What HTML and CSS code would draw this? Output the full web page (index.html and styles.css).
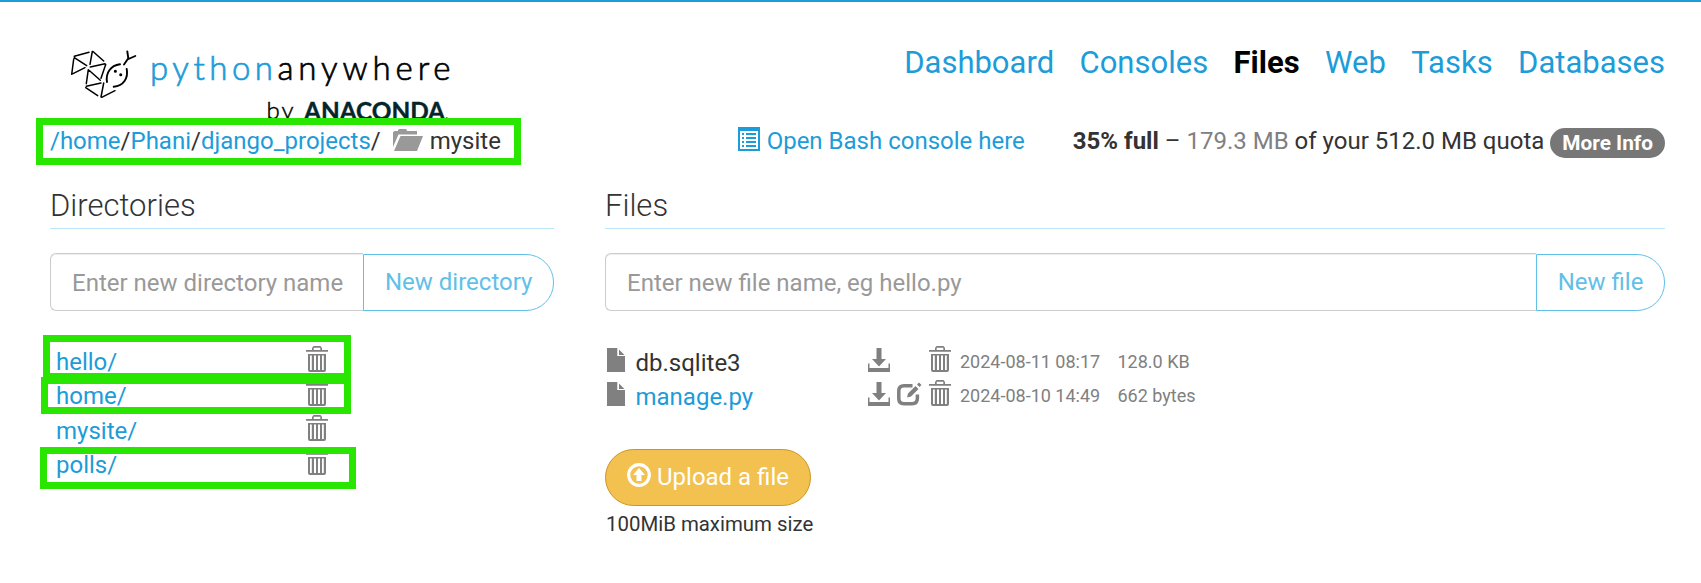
FILE: index.html
```html
<!DOCTYPE html>
<html lang="en">
<head>
<meta charset="utf-8">
<title>Files : PythonAnywhere</title>
<link rel="stylesheet" href="styles.css">
</head>
<body>
<svg class="defs" width="0" height="0">
  <symbol id="trash" viewBox="0 0 22 26">
    <path fill="currentColor" d="M0 4h6V2l1.500-2h7L16 2v2h6v1.700H0zM7.700 4h6.600V1.700H7.700zM2 8h18v16q0 2-2 2H4q-2 0-2-2zM4 9.500V24h1.800V9.500zM8 9.500V24h2V9.500zM12 9.500V24h2V9.500zM16 9.500V24h1.800V9.500z" fill-rule="evenodd"/>
  </symbol>
  <symbol id="download" viewBox="0 0 22 24">
    <path fill="currentColor" d="M8.500 0h5v11H18l-7 7.500L4 11h4.500zM0 15.500h1.500V20h19v-4.500H22V24H0z"/>
  </symbol>
  <symbol id="file" viewBox="0 0 18 24">
    <path fill="currentColor" d="M0 0h10.300v8H18v16H0zM12 1.500L17.500 7H12z"/>
  </symbol>
</svg>
<header class="header">
  <svg class="logo" width="400" height="80" viewBox="0 0 400 80">
    <g transform="translate(7 0)" fill="none" stroke="#000" stroke-width="1.500" stroke-linecap="round">
      <path d="M4.300 16.300L19 12.300M4.300 17.700L16.700 25.700M3.700 19L1.700 34.300M3 33.700L15 27.700M22.300 11.500L20 24.300M23 11.500L33.700 21M20.300 27L35 23.700M35.700 24.500L31 38.300M18.300 29.700L16.300 43.700M19 30.300L30.300 40.300M16.300 46.300L31 43M15.700 47.700L27.700 55.700M33.700 43L31 57M31.700 57.300L45 50.700"/>
      <path stroke-width="1.900" d="M37 42C35.500 33 40.500 25.500 50 24.300M56.700 29C58.500 38 53.500 46 43.700 46.700M54 24.500L58.300 18.300L57.300 11.500M58.500 19L65.300 16"/>
      <path stroke-width="3" d="M45.300 31.300h.1M50.700 34.700h.1"/>
    </g>
    <text class="logo-python" x="87" y="39.500" textLength="123">python</text>
    <text class="logo-anywhere" x="214.500" y="39.500" textLength="173">anywhere</text>
    <text class="logo-by" x="203.500" y="79" textLength="27">by</text>
    <text class="logo-anaconda" x="241" y="79.500" textLength="141" lengthAdjust="spacingAndGlyphs">ANACONDA</text>
    <text class="logo-dot" x="382" y="79">.</text>
  </svg>
  <nav class="nav">
    <a>Dashboard</a><a>Consoles</a><a class="active">Files</a><a>Web</a><a>Tasks</a><a>Databases</a>
  </nav>
</header>

<div class="pathbar">
  <div class="crumbs"><a>/home</a>/<a>Phani</a>/<a>django_projects</a>/
    <svg class="folder" width="30" height="22" viewBox="0 0 30 22"><path fill="#999" d="M0 18V3l2-1h3V1.500Q5 0 6.500 0h6Q14 0 14 2h10v3.500H5.500zM7.500 7H30l-6 15H1z"/></svg>
    <span>mysite</span></div>
  <div class="status">
    <a class="bash"><svg width="22" height="24" viewBox="0 0 22 24"><path fill="#1c9cd8" fill-rule="evenodd" d="M0 0h22v24H0zM2 4v18h18V4z"/><path stroke="#1c9cd8" stroke-width="1.800" d="M4 7h2M8 7h10M4 11h2M8 11h10M4 15h2M8 15h10M4 19h2M8 19h10"/></svg>Open Bash console here</a>
    <span class="quota"><b>35% full</b> – <span class="used">179.3 MB</span> of your 512.0 MB quota</span>
    <span class="more">More Info</span>
  </div>
</div>

<main class="columns">
  <section class="dirs">
    <h2>Directories</h2>
    <div class="group"><span class="field">Enter new directory name</span><span class="btn">New directory</span></div>
    <div class="row"><a>hello/</a><svg class="trash"><use href="#trash"/></svg></div>
    <div class="row"><a>home/</a><svg class="trash"><use href="#trash"/></svg></div>
    <div class="row"><a>mysite/</a><svg class="trash"><use href="#trash"/></svg></div>
    <div class="row"><a>polls/</a><svg class="trash"><use href="#trash"/></svg></div>
  </section>
  <section class="files">
    <h2>Files</h2>
    <div class="group"><span class="field">Enter new file name, eg hello.py</span><span class="btn">New file</span></div>
    <div class="row">
      <svg class="file"><use href="#file"/></svg><span class="name">db.sqlite3</span>
      <svg class="download"><use href="#download"/></svg><span class="edit"></span>
      <svg class="trash"><use href="#trash"/></svg><span class="date">2024-08-11 08:17</span><span class="size">128.0 KB</span>
    </div>
    <div class="row">
      <svg class="file"><use href="#file"/></svg><a class="name">manage.py</a>
      <svg class="download"><use href="#download"/></svg>
      <svg class="edit" viewBox="0 0 25 24"><path fill="none" stroke="#808080" stroke-width="3.500" d="M15.500 3.800H7Q1.800 3.800 1.800 9v7.500Q1.800 21.700 7 21.700h8Q20.400 21.700 20.400 16v-3.500"/><path fill="#808080" d="M10 15.500l1-4L18.500 4l3 3L14 14.500zM20 2.500L22 .5l2.500 2.500-2 2z"/></svg>
      <svg class="trash"><use href="#trash"/></svg><span class="date">2024-08-10 14:49</span><span class="size">662 bytes</span>
    </div>
    <div class="upload">
      <svg width="24" height="24" viewBox="0 0 24 24"><circle cx="12" cy="12" r="10.300" fill="none" stroke="#fff" stroke-width="3.200"/><path fill="#fff" d="M12 5l6 7h-3.500v6h-5v-6H6z"/></svg>Upload a file</div>
    <div class="limit">100MiB maximum size</div>
  </section>
</main>

<div class="mark mark-path"></div>
<div class="mark mark-hello"></div>
<div class="mark mark-home"></div>
<div class="mark mark-polls"></div>
</body>
</html>
```
FILE: styles.css
```css
* { box-sizing: border-box; }
body {
  margin: 0;
  height: 583px;
  overflow: hidden;
  padding: 0 36px 0 50px;
  border-top: 2px solid #1c9cd8;
  background: #fff;
  color: #333;
  font: 24px/34.28px Roboto, sans-serif;
  position: relative;
}
.defs { position: absolute; }
a { color: #1c9cd8; text-decoration: none; }
svg { flex: none; }

.header { display: flex; justify-content: space-between; height: 122px; padding-top: 38px; }
.logo { margin-left: 13px; overflow: visible; }
.logo text { font-family: Lato, sans-serif; }
.logo .logo-python { font-size: 33px; font-weight: 300; fill: #1c9cd8; stroke: #1c9cd8; stroke-width: .7px; }
.logo .logo-anywhere { font-size: 33px; font-weight: 300; fill: #000; stroke: #000; stroke-width: .7px; }
.logo .logo-by { font-size: 24px; font-weight: 300; fill: #000; stroke: #000; stroke-width: .5px; }
.logo .logo-anaconda { font-size: 24px; font-weight: 700; fill: #05252d; stroke: #05252d; stroke-width: .4px; }
.logo .logo-dot { font-size: 14px; fill: #05252d; }
.nav { display: flex; gap: 25.4px; font-size: 31px; line-height: 46px; }
.nav .active { color: #000; font-weight: 700; }

.pathbar { display: flex; justify-content: space-between; height: 62px; white-space: nowrap; }
.folder { margin: 0 1px 0 6px; vertical-align: -2px; }
.status { display: flex; }
.bash { display: flex; margin-right: 48px; }
.bash svg { margin: 3px 7px 0 0; }
.used { color: #808080; }
.more {
  height: 30px;
  margin: 4px 0 0 6px;
  padding: 0 12px;
  border-radius: 15px;
  background: #777;
  color: #fff;
  font-size: 20.8px;
  font-weight: 700;
  line-height: 30px;
}

.columns { display: flex; gap: 51px; }
.dirs { width: 504px; }
.files { width: 1060px; }
h2 {
  height: 43px;
  margin: 0 0 24px;
  border-bottom: 1px solid #b9e9fb;
  font-size: 31px;
  font-weight: 300;
  line-height: 40px;
}
.group { display: flex; height: 58px; margin-bottom: 34px; white-space: nowrap; }
.field {
  flex: 1;
  padding-left: 21px;
  border: 1px solid #ccc;
  border-right: 0;
  border-radius: 6px 0 0 6px;
  box-shadow: inset 0 1px 1px rgba(0, 0, 0, .075);
  color: #999;
  line-height: 58px;
}
.btn {
  margin-top: 1px;
  padding: 0 20.6px;
  border: 1px solid #61c0e8;
  border-radius: 0 28px 28px 0;
  color: #61c0e8;
  line-height: 54px;
}
.row { display: flex; height: 34.28px; color: #808080; white-space: nowrap; }
.dirs .row { padding-left: 6px; }
.dirs .row a { width: 250px; line-height: 35.6px; }
.trash { width: 22px; height: 26px; margin-top: 1px; }
.file { width: 18px; height: 24px; margin: 3px 10.5px 0 2px; }
.name { width: 232.5px; line-height: 36px; }
span.name { color: #333; }
.download { width: 22px; height: 24px; margin: 3px 7px 0 0; }
.edit { width: 25px; height: 24px; margin: 3px 7px 0 0; }
.date, .size { font-size: 18px; line-height: 33px; }
.date { width: 157.5px; margin-left: 9px; }
.upload {
  display: flex;
  width: 206px;
  height: 57px;
  margin-top: 35px;
  padding-left: 21px;
  border: 1px solid #cd9622;
  border-radius: 29px;
  background: #f3c14f;
  color: #fff;
  line-height: 55px;
}
.upload svg { margin: 13px 6px 0 0; }
.limit { padding-left: 1px; margin-top: 1px; font-size: 20.4px; }

/* Highlight frames laid over the page */
.mark { position: absolute; border: 7px solid #28e600; }
.mark-path { left: 36px; top: 116px; width: 485px; height: 47px; }
.mark-hello { left: 43px; top: 333px; width: 308px; height: 45px; }
.mark-home { left: 41px; top: 375px; width: 310px; height: 37px; }
.mark-polls { left: 40px; top: 445px; width: 316px; height: 42px; }
```
